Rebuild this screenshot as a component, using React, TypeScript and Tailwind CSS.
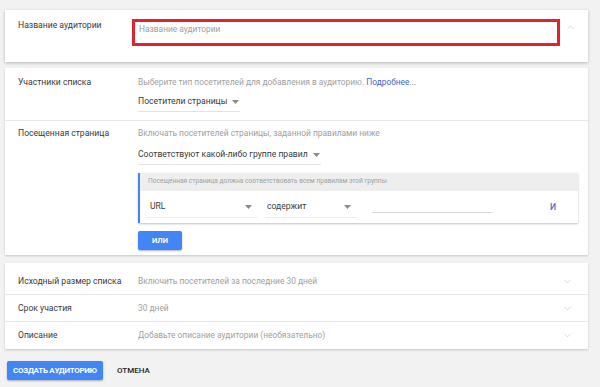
import { ChevronDown, ChevronUp } from "lucide-react";

const font = { fontFamily: "Roboto, 'Noto Sans', sans-serif" };

function Caret() {
  return (
    <svg width="7" height="4" viewBox="0 0 7 4" className="ml-[5px] shrink-0">
      <path d="M0 0h7L3.5 4z" fill="#8a8a8a" />
    </svg>
  );
}

function Dropdown({ label, width }: { label: string; width: string }) {
  return (
    <div className={`flex h-[20px] items-center whitespace-nowrap border-b border-[#e3e3e3] text-[8.6px] text-[#3a3a3a] ${width}`}>
      <span>{label}</span>
      <Caret />
    </div>
  );
}

function CollapsedRow({ label, value, last }: { label: string; value: string; last?: boolean }) {
  return (
    <div className={`flex h-[27px] items-center ${last ? "" : "border-b border-[#e8e8e8]"}`}>
      <div className="w-[133px] whitespace-nowrap pl-[13px] text-[8.6px] text-[#3a3a3a]">{label}</div>
      <div className="flex-1 whitespace-nowrap text-[8.4px] text-[#a0a0a0]">{value}</div>
      <ChevronDown size={11} strokeWidth={1.5} className="mr-[15px] text-[#c4c4c4]" />
    </div>
  );
}

export default function App() {
  return (
    <div className="h-[387px] w-[600px] overflow-hidden bg-[#f2f2f2] pl-[5px] pr-[12px] pt-[10px]" style={font}>
      {/* audience name */}
      <div className="flex h-[52px] items-start bg-white shadow-[0_1px_3px_rgba(0,0,0,0.25)]">
        <div className="w-[127px] whitespace-nowrap pl-[13px] pt-[9px] text-[8.6px] text-[#3a3a3a]">Название аудитории</div>
        <div className="mt-[9px] h-[27px] w-[428px] border-[3px] border-[#e1232f] pl-[4px] pt-[1px] text-[8.4px] text-[#a0a0a0]">
          Название аудитории
        </div>
        <ChevronUp size={11} strokeWidth={1.5} className="ml-[5px] mt-[12px] text-[#c4c4c4]" />
      </div>

      {/* members + visited page */}
      <div className="mt-[6px] h-[187px] bg-white shadow-[0_1px_2px_rgba(0,0,0,0.18)]">
        <div className="flex h-[53px] border-b border-[#e8e8e8] pt-[9px]">
          <div className="w-[133px] pl-[13px] text-[8.6px] leading-[11px] text-[#3a3a3a]">Участники списка</div>
          <div className="flex flex-col">
            <div className="whitespace-nowrap text-[8.4px] leading-[11px] text-[#a0a0a0]">
              Выберите тип посетителей для добавления в аудиторию.{" "}
              <span className="text-[#3b68c9]">Подробнее...</span>
            </div>
            <div className="mt-[4px]">
              <Dropdown label="Посетители страницы" width="w-[102px]" />
            </div>
          </div>
        </div>

        <div className="flex pt-[7px]">
          <div className="w-[133px] pl-[13px] text-[8.6px] leading-[11px] text-[#3a3a3a]">Посещенная страница</div>
          <div className="flex flex-1 flex-col pr-[10px]">
            <div className="whitespace-nowrap text-[8.4px] leading-[11px] text-[#a0a0a0]">
              Включать посетителей страницы, заданной правилами ниже
            </div>
            <div className="mt-[6px]">
              <Dropdown label="Соответствуют какой-либо группе правил" width="w-[183px]" />
            </div>

            <div className="mt-[8px] border-l-[2px] border-[#4285f4] bg-white shadow-[0_1px_2px_rgba(0,0,0,0.25)]">
              <div className="flex h-[18px] items-center whitespace-nowrap bg-[#eeeeee] pl-[8px] text-[6.6px] text-[#a0a0a0]">
                Посещенная страница должна соответствовать всем правилам этой группы
              </div>
              <div className="flex h-[32px] items-center pl-[6px]">
                <div className="flex h-[22px] w-[112px] items-center justify-between border-b border-[#f0f0f0] pr-[6px] text-[8.6px] text-[#3a3a3a]">
                  <span className="pl-[4px]">URL</span>
                  <Caret />
                </div>
                <div className="ml-[7px] flex h-[22px] w-[92px] items-center justify-between border-b border-[#f0f0f0] pr-[6px] text-[8.6px] text-[#3a3a3a]">
                  <span className="pl-[2px]">содержит</span>
                  <Caret />
                </div>
                <div className="ml-[15px] mt-[10px] h-px w-[121px] bg-[#d9d9d9]" />
                <div className="ml-auto mr-[22px] text-[8.6px] font-medium text-[#4a6fc7]">И</div>
              </div>
            </div>

            <div className="mt-[8px] flex h-[19px] w-[44px] items-center justify-center rounded-[2px] bg-[#4285f4] text-[7.6px] font-bold text-white shadow-[0_1px_2px_rgba(0,0,0,0.3)]">
              ИЛИ
            </div>
          </div>
        </div>
      </div>

      {/* collapsed settings */}
      <div className="mt-[8px] bg-white pt-[5px] shadow-[0_1px_2px_rgba(0,0,0,0.18)]">
        <CollapsedRow label="Исходный размер списка" value="Включить посетителей за последние 30 дней" />
        <CollapsedRow label="Срок участия" value="30 дней" />
        <CollapsedRow label="Описание" value="Добавьте описание аудитории (необязательно)" last />
      </div>

      <div className="mt-[12px] flex items-center">
        <div className="ml-[2px] flex h-[19px] w-[96px] items-center justify-center whitespace-nowrap rounded-[2px] bg-[#4285f4] text-[8px] font-bold tracking-[-0.3px] text-white shadow-[0_1px_2px_rgba(0,0,0,0.3)]">
          СОЗДАТЬ АУДИТОРИЮ
        </div>
        <div className="ml-[14px] text-[8px] font-medium text-[#222]">ОТМЕНА</div>
      </div>
    </div>
  );
}
